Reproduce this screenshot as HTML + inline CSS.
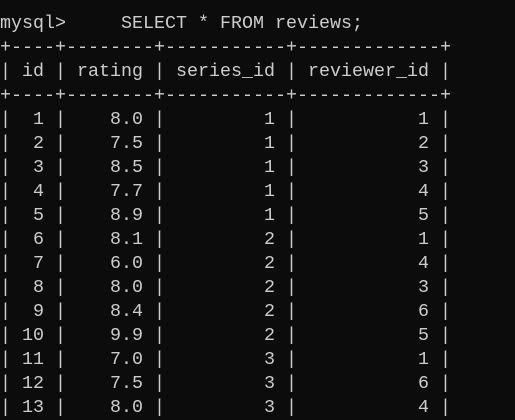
<html><head><style>
body{margin:0;background:#0c0c0c;width:515px;height:406px;overflow:hidden}
pre{margin:0;position:absolute;left:0;top:12px;font-family:"Liberation Mono",monospace;font-size:18.33px;line-height:24px;color:#cccccc}
</style></head><body><pre>mysql>     SELECT * FROM reviews;
+----+--------+-----------+-------------+
| id | rating | series_id | reviewer_id |
+----+--------+-----------+-------------+
|  1 |    8.0 |         1 |           1 |
|  2 |    7.5 |         1 |           2 |
|  3 |    8.5 |         1 |           3 |
|  4 |    7.7 |         1 |           4 |
|  5 |    8.9 |         1 |           5 |
|  6 |    8.1 |         2 |           1 |
|  7 |    6.0 |         2 |           4 |
|  8 |    8.0 |         2 |           3 |
|  9 |    8.4 |         2 |           6 |
| 10 |    9.9 |         2 |           5 |
| 11 |    7.0 |         3 |           1 |
| 12 |    7.5 |         3 |           6 |
| 13 |    8.0 |         3 |           4 |
</pre></body></html>
